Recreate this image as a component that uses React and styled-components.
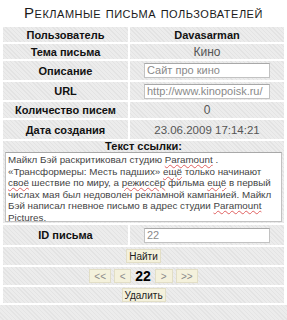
import React from "react";
import styled, { createGlobalStyle } from "styled-components";

const Global = createGlobalStyle`
  html, body {
    margin: 0;
    padding: 0;
    background: repeating-linear-gradient(45deg, #e4e4e4 0 1px, #ececec 1px 3px);
    font-family: "Liberation Sans", Arial, sans-serif;
  }
`;

const Page = styled.div`
  background: #fff;
  width: 287px;
`;

const Title = styled.h1`
  margin: 0;
  height: 25px;
  display: flex;
  align-items: center;
  justify-content: center;
  font-size: 15px;
  font-weight: normal;
  font-variant: small-caps;
  letter-spacing: 0.5px;
  color: #1a1a1a;
`;

const Grid = styled.div`
  display: grid;
  grid-template-columns: 125px 1fr;
  gap: 2px;
  padding: 2px 1px 2px 3px;
  margin-right: 2px;
`;

const Cell = styled.div`
  background: repeating-linear-gradient(45deg, #e3e3e3 0 1px, #ececec 1px 3px);
  display: flex;
  align-items: center;
  justify-content: center;
  height: ${(p) => p.$h}px;
  grid-column: ${(p) => (p.$wide ? "1 / span 2" : "auto")};
  gap: ${(p) => p.$gap || 0}px;
`;

const Label = styled.span`
  font-weight: bold;
  font-size: 11px;
  color: #111;
`;

const Value = styled.span`
  font-size: ${(p) => p.$size || 11}px;
  font-weight: ${(p) => (p.$bold ? "bold" : "normal")};
  color: ${(p) => (p.$bold ? "#111" : "#555")};
`;

const Field = styled.div`
  box-sizing: border-box;
  width: 126px;
  height: 15px;
  background: #fff;
  border: 1px solid #c2c2c2;
  border-top-color: #a8a8a8;
  font-size: 11px;
  line-height: 13px;
  color: #8a8a8a;
  padding: 0 2px;
  white-space: nowrap;
  overflow: hidden;
`;

const TextCell = styled.div`
  grid-column: 1 / span 2;
  background: repeating-linear-gradient(45deg, #e3e3e3 0 1px, #ececec 1px 3px);
  display: flex;
  flex-direction: column;
  align-items: stretch;
  padding: 0 2px 1px 2px;
  height: 82px;
  box-sizing: border-box;
`;

const TextHead = styled.div`
  text-align: center;
  font-weight: bold;
  font-size: 11px;
  color: #111;
  height: 11px;
  line-height: 11px;
`;

const TextBox = styled.div`
  flex: 1;
  background: #fff;
  border: 1px solid #c2c2c2;
  border-top-color: #a8a8a8;
  font-size: 9.8px;
  line-height: 11.5px;
  color: #444;
  padding: 1px 2px;
  overflow: hidden;
  white-space: nowrap;
`;

const Miss = styled.span`
  text-decoration: underline wavy #e06060;
  text-decoration-thickness: 1px;
  text-underline-offset: 1px;
`;

const Button = styled.span`
  display: inline-flex;
  align-items: center;
  justify-content: center;
  box-sizing: border-box;
  height: 14px;
  min-width: ${(p) => p.$w}px;
  background: #f4f1dc;
  border: 1px solid #e2dec6;
  font-size: 10px;
  color: ${(p) => (p.$muted ? "#8a8a8a" : "#222")};
`;

const Current = styled.span`
  font-weight: bold;
  font-size: 14px;
  color: #000;
  padding: 0 1px;
`;

export default function App() {
  return (
    <>
      <Global />
      <Page>
        <Title>Рекламные письма пользователей</Title>
        <Grid>
          <Cell $h={15}><Label>Пользователь</Label></Cell>
          <Cell $h={15}><Value $bold>Davasarman</Value></Cell>
          <Cell $h={15}><Label>Тема письма</Label></Cell>
          <Cell $h={15}><Value $size={12}>Кино</Value></Cell>
          <Cell $h={19}><Label>Описание</Label></Cell>
          <Cell $h={19}><Field>Сайт про кино</Field></Cell>
          <Cell $h={18}><Label>URL</Label></Cell>
          <Cell $h={18}><Field>http://www.kinopoisk.ru/</Field></Cell>
          <Cell $h={16}><Label>Количество писем</Label></Cell>
          <Cell $h={16}><Value $size={12}>0</Value></Cell>
          <Cell $h={19}><Label>Дата создания</Label></Cell>
          <Cell $h={19}><Value $size={11.5}>23.06.2009 17:14:21</Value></Cell>
          <TextCell>
            <TextHead>Текст ссылки:</TextHead>
            <TextBox>
              Майкл Бэй раскритиковал студию <Miss>Paramount</Miss> .<br />
              «Трансформеры: Месть падших» <Miss>ещё</Miss> только начинают<br />
              <Miss>своё</Miss> шествие по миру, а <Miss>режиссёр</Miss> фильма <Miss>ещё</Miss> в первый<br />
              числах мая был недоволен рекламной кампанией. Майкл<br />
              Бэй написал гневное письмо в адрес студии <Miss>Paramount</Miss><br />
              <Miss>Pictures</Miss>.
            </TextBox>
          </TextCell>
          <Cell $h={20}><Label>ID письма</Label></Cell>
          <Cell $h={20}><Field>22</Field></Cell>
          <Cell $wide $h={18}><Button $w={35}>Найти</Button></Cell>
          <Cell $wide $h={18} $gap={3}>
            <Button $w={22} $muted>&lt;&lt;</Button>
            <Button $w={17} $muted>&lt;</Button>
            <Current>22</Current>
            <Button $w={18} $muted>&gt;</Button>
            <Button $w={22} $muted>&gt;&gt;</Button>
          </Cell>
          <Cell $wide $h={16}><Button $w={44}>Удалить</Button></Cell>
        </Grid>
      </Page>
    </>
  );
}
